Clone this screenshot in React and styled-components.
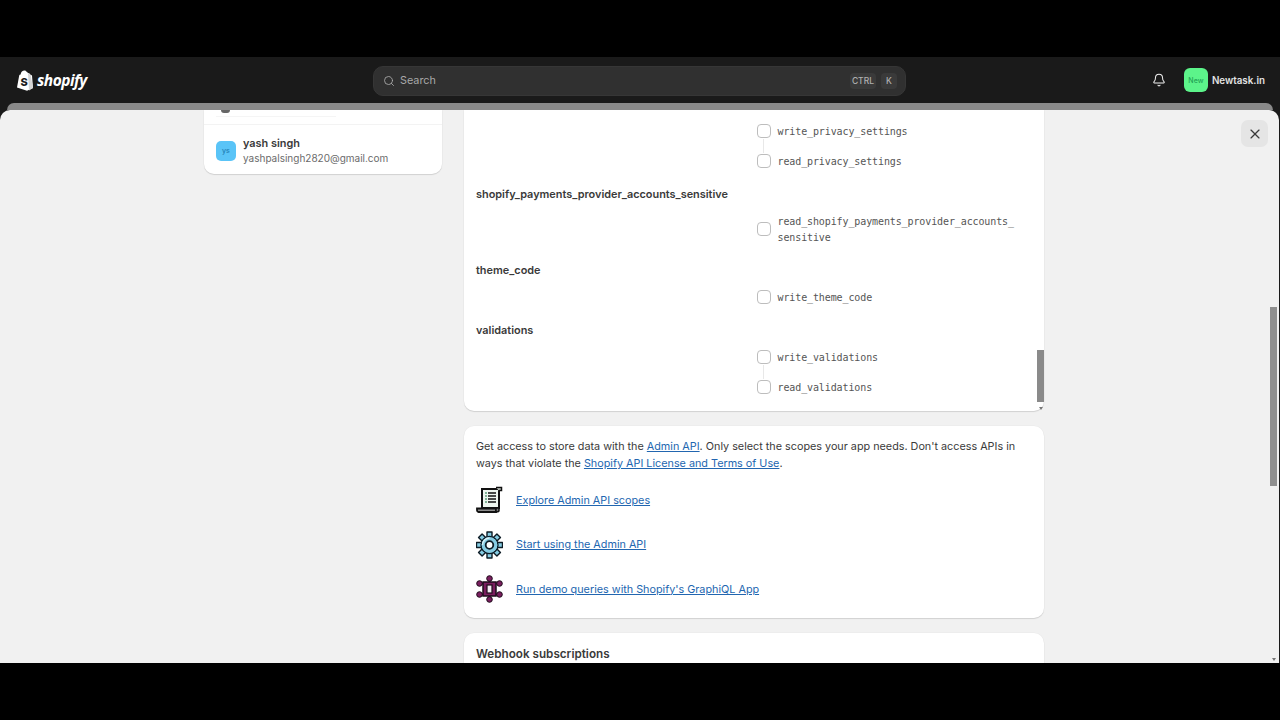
import React from 'react';
import styled, { createGlobalStyle } from 'styled-components';
import { Bell, Search, X } from 'lucide-react';

const GlobalStyle = createGlobalStyle`
  html, body {
    margin: 0;
    padding: 0;
    background: #000;
    font-family: Inter, "Liberation Sans", sans-serif;
    overflow: hidden;
  }
  * { box-sizing: border-box; }
`;

const Page = styled.div`
  width: 1280px;
  height: 720px;
  padding: 57px 0;
  background: #000;
`;

const Shell = styled.div`
  height: 606px;
  background: #1a1a1a;
  display: flex;
  flex-direction: column;
`;

const TopBar = styled.header`
  height: 46px;
  flex: none;
  display: grid;
  grid-template-columns: 1fr 533px 1fr;
  align-items: center;
  padding: 0 16px 0 15px;
`;

const Logo = styled.div`
  display: flex;
  align-items: center;
  gap: 3px;
  margin-left: 1px;
  color: #fff;
`;

const LogoText = styled.span`
  font-family: "Open Sans", sans-serif;
  font-style: italic;
  font-weight: 700;
  font-size: 15.5px;
  letter-spacing: -0.5px;
`;

const SearchBox = styled.div`
  height: 30px;
  margin-top: 1px;
  display: flex;
  align-items: center;
  gap: 5px;
  padding: 0 8px 0 9px;
  background: #303030;
  border: 1px solid #363636;
  border-radius: 10px;
  color: #a8a8a8;
  font-size: 10.8px;
`;

const SearchLabel = styled.span`
  flex: 1;
`;

const Key = styled.span`
  height: 16px;
  padding: 0 2px;
  min-width: 16px;
  display: flex;
  align-items: center;
  justify-content: center;
  background: #3a3a3a;
  border-radius: 4px;
  font-size: 8.5px;
  font-weight: 500;
  color: #b0b0b0;
`;

const Account = styled.div`
  display: flex;
  align-items: center;
  justify-content: flex-end;
  margin-right: -1px;
  color: #e3e3e3;
  font-size: 9.8px;
  font-weight: 600;
`;

const BellWrap = styled.span`
  display: flex;
  margin-right: 18px;
  color: #f1f1f1;
`;

const NewBadge = styled.span`
  width: 24px;
  height: 24px;
  margin-right: 4px;
  display: flex;
  align-items: center;
  justify-content: center;
  background: #5cf48a;
  border-radius: 6px;
  color: #22a455;
  font-size: 7px;
  font-weight: 500;
`;

const Strip = styled.div`
  height: 7px;
  flex: none;
  margin: 0 7px;
  background: #8a8a8a;
  border-radius: 8px 8px 0 0;
`;

const Modal = styled.main`
  position: relative;
  flex: 1;
  min-height: 0;
  overflow: hidden;
  margin-right: 1px;
  padding-left: 204px;
  display: flex;
  align-items: flex-start;
  gap: 22px;
  background: #f1f1f1;
  border-radius: 10px 10px 0 0;
`;

const Card = styled.section`
  background: #fff;
  box-shadow: 0 1px 1px rgba(0, 0, 0, 0.12), 0 0 0 0.5px rgba(0, 0, 0, 0.03);
`;

const Sidebar = styled(Card)`
  width: 238px;
  flex: none;
  border-radius: 0 0 10px 10px;
`;

const ClippedRow = styled.div`
  height: 15px;
  padding: 0 12px;
  border-bottom: 1px solid #f3f3f3;
`;

const ClippedInner = styled.div`
  height: 4px;
  width: 120px;
  border-bottom: 1px solid #f5f5f5;
`;

const ClippedIcon = styled.div`
  width: 9px;
  height: 3px;
  margin-left: 5px;
  background: #666;
  border-radius: 0 0 3px 3px;
`;

const MemberRow = styled.div`
  display: flex;
  align-items: center;
  gap: 7px;
  padding: 10px 12px 8px;
`;

const MemberAvatar = styled.span`
  width: 20px;
  height: 20px;
  display: flex;
  align-items: center;
  justify-content: center;
  background: #5ac4f7;
  border-radius: 5px;
  color: #1f7fb5;
  font-size: 7px;
  font-weight: 500;
`;

const MemberName = styled.div`
  font-size: 10.9px;
  line-height: 16px;
  font-weight: 600;
  color: #3a3a3a;
`;

const MemberEmail = styled.div`
  font-size: 10px;
  line-height: 15px;
  color: #6b6b6b;
`;

const Main = styled.div`
  width: 580px;
  flex: none;
  display: flex;
  flex-direction: column;
  gap: 15px;
`;

const ScopesCard = styled(Card)`
  position: relative;
  padding: 13px 12px 16px;
  border-radius: 0 0 10px 10px;
  display: flex;
  flex-direction: column;
  gap: 16px;
`;

const ScopeGroup = styled.div`
  display: flex;
  flex-direction: column;
  gap: 12px;
`;

const ScopeTitle = styled.h3`
  margin: 0;
  padding-top: 1px;
  height: 16px;
  font-size: 10.9px;
  line-height: 16px;
  font-weight: 600;
  color: #3a3a3a;
`;

const ScopeList = styled.div`
  display: flex;
  flex-direction: column;
  padding-left: 281px;
`;

const ScopeRow = styled.label`
  display: flex;
  align-items: center;
  gap: 7px;
`;

const Checkbox = styled.span`
  width: 13.500px;
  height: 13.500px;
  flex: none;
  background: #fff;
  border: 1px solid #bdbdbd;
  border-radius: 4px;
`;

const ScopeName = styled.code`
  width: 245px;
  padding-top: 1px;
  margin-bottom: -1px;
  font-family: "DejaVu Sans Mono", "Liberation Mono", monospace;
  font-size: 10px;
  letter-spacing: -0.11px;
  line-height: 16px;
  color: #555;
`;

const Connector = styled.div`
  width: 1px;
  height: 14px;
  margin-left: 6px;
  background: #e8e8e8;
`;

const InnerBar = styled.div`
  position: absolute;
  right: 0;
  top: 240px;
  width: 7px;
  height: 52px;
  background: #8a8a8a;
`;

const InfoCard = styled(Card)`
  padding: 12px 12px 15px;
  border-radius: 10px;
`;

const InfoText = styled.p`
  margin: 0 0 14px;
  font-size: 10.8px;
  line-height: 17px;
  color: #3a3a3a;
`;

const TextLink = styled.a`
  color: #2266b0;
  text-decoration: underline;
`;

const ResourceList = styled.div`
  display: flex;
  flex-direction: column;
  gap: 16.500px;
`;

const ResourceRow = styled.div`
  height: 28px;
  display: flex;
  align-items: center;
  gap: 13px;
  font-size: 10.8px;
`;

const WebhookCard = styled(Card)`
  height: 60px;
  padding: 13px 12px;
  border-radius: 10px 10px 0 0;
`;

const WebhookTitle = styled.h2`
  margin: 0;
  font-size: 11.7px;
  line-height: 16px;
  font-weight: 600;
  color: #3a3a3a;
`;

const CloseButton = styled.button`
  position: absolute;
  top: 10px;
  right: 11px;
  width: 27px;
  height: 27px;
  padding: 0;
  display: flex;
  align-items: center;
  justify-content: center;
  background: #e5e5e5;
  border: none;
  border-radius: 7px;
  color: #3a3a3a;
`;

const PageBar = styled.div`
  position: absolute;
  top: 197px;
  right: 2px;
  width: 7px;
  height: 179px;
  background: #8f8f8f;
`;

const ScrollArrow = styled.div`
  position: absolute;
  right: ${(p) => p.$right}px;
  bottom: ${(p) => p.$bottom}px;
  width: 0;
  height: 0;
  border-left: 2px solid transparent;
  border-right: 2px solid transparent;
  border-top: 3px solid #777;
`;

const ShopifyMark = () => (
  <svg width="18" height="21" viewBox="0 0 18 21">
    <path d="M1 17.6 3.200 5.400c.2-.6.6-.8 1.400-1C5 2 6.400.4 8.500.4c1 0 1.500.5 1.700 1 .8 0 1.500.8 1.800 1.900l1.200-.3.600 1.200 2.200 1.300L17 18l-6 2.800z" fill="#fff" />
    <path d="M12 3.500 13 20.500l4-2.500-2.300-13z" fill="#d5d5d5" />
    <text x="4.500" y="15.500" fontSize="11" fontWeight="800" fontFamily="Inter, sans-serif" fill="#1a1a1a">S</text>
  </svg>
);

const ScrollIcon = () => (
  <svg width="27" height="28" viewBox="0 0 27 28">
    <rect x="6" y="3" width="17" height="19" fill="#eef6ef" stroke="#111" strokeWidth="2" />
    <path d="M20 1.500h5.500v3H23" fill="#cfd6cf" stroke="#111" strokeWidth="1.500" />
    <path d="M12 7h8M12 10h8M12 13h8M12 16h8" stroke="#111" strokeWidth="1.700" />
    <path d="M9 7h2M9 10h2M9 13h2M9 16h2" stroke="#5f9f7c" strokeWidth="1.700" />
    <path d="M1 22.500h19v3.500H2.500C1.500 26 1 25 1 24z" fill="#8d8d8d" stroke="#111" strokeWidth="1.800" />
    <path d="M20 22h3v2.500c0 1-1 1.500-3 1.500z" fill="#777" stroke="#111" strokeWidth="1.500" />
  </svg>
);

const GearIcon = () => (
  <svg width="27" height="28" viewBox="0 0 27 28">
    <g fill="#86cde4" stroke="#0d1c26" strokeWidth="1.400" strokeLinejoin="round">
      {[0, 45, 90, 135, 180, 225, 270, 315].map((a) => (
        <rect key={a} x="11" y="1" width="5" height="6" transform={`rotate(${a} 13.500 14)`} />
      ))}
      <circle cx="13.500" cy="14" r="8.500" />
    </g>
    <circle cx="13.500" cy="14" r="7.800" fill="#86cde4" />
    <path d="M6.500 14a7 7 0 0 1 7-7" fill="none" stroke="#d6f0f8" strokeWidth="1.500" />
    <circle cx="13.500" cy="14" r="3.800" fill="#fbfeff" stroke="#0d1c26" strokeWidth="1.800" />
  </svg>
);

const GraphIcon = () => (
  <svg width="27" height="28" viewBox="0 0 27 28">
    <path d="M13.500 3v22M3.500 8.500h20M3.500 19.500h20" stroke="#1d0c1a" strokeWidth="2" />
    <rect x="7" y="7" width="13" height="14" fill="#7a1f5f" stroke="#1d0c1a" strokeWidth="1.500" />
    <rect x="11" y="10" width="5" height="8" fill="#f6eef4" stroke="#1d0c1a" strokeWidth="1.200" />
    {[[13.5, 3.5], [13.5, 24.5], [3.5, 8.5], [23.5, 8.5], [3.5, 19.5], [23.5, 19.5]].map(([cx, cy]) => (
      <circle key={`${cx}-${cy}`} cx={cx} cy={cy} r="2.800" fill="#7a1f5f" stroke="#1d0c1a" strokeWidth="1" />
    ))}
  </svg>
);

const scopeGroups = [
  { title: null, scopes: ['write_privacy_settings', 'read_privacy_settings'] },
  { title: 'shopify_payments_provider_accounts_sensitive', scopes: ['read_shopify_payments_provider_accounts_\u200Bsensitive'] },
  { title: 'theme_code', scopes: ['write_theme_code'] },
  { title: 'validations', scopes: ['write_validations', 'read_validations'] },
];

const resources = [
  { icon: <ScrollIcon />, label: 'Explore Admin API scopes' },
  { icon: <GearIcon />, label: 'Start using the Admin API' },
  { icon: <GraphIcon />, label: "Run demo queries with Shopify's GraphiQL App" },
];

export default function App() {
  return (
    <Page>
      <GlobalStyle />
      <Shell>
        <TopBar>
          <Logo>
            <ShopifyMark />
            <LogoText>shopify</LogoText>
          </Logo>
          <SearchBox>
            <Search size={12} strokeWidth={1.75} />
            <SearchLabel>Search</SearchLabel>
            <Key>CTRL</Key>
            <Key>K</Key>
          </SearchBox>
          <Account>
            <BellWrap><Bell size={14} strokeWidth={1.75} /></BellWrap>
            <NewBadge>New</NewBadge>
            Newtask.in
          </Account>
        </TopBar>
        <Strip />
        <Modal>
          <Sidebar>
            <ClippedRow>
              <ClippedIcon />
              <ClippedInner />
            </ClippedRow>
            <MemberRow>
              <MemberAvatar>ys</MemberAvatar>
              <div>
                <MemberName>yash singh</MemberName>
                <MemberEmail>yashpalsingh2820@gmail.com</MemberEmail>
              </div>
            </MemberRow>
          </Sidebar>
          <Main>
            <ScopesCard>
              {scopeGroups.map((group) => (
                <ScopeGroup key={group.scopes[0]}>
                  {group.title && <ScopeTitle>{group.title}</ScopeTitle>}
                  <ScopeList>
                    {group.scopes.map((scope, i) => (
                      <React.Fragment key={scope}>
                        {i > 0 && <Connector />}
                        <ScopeRow>
                          <Checkbox />
                          <ScopeName>{scope}</ScopeName>
                        </ScopeRow>
                      </React.Fragment>
                    ))}
                  </ScopeList>
                </ScopeGroup>
              ))}
              <InnerBar />
              <ScrollArrow $right={1} $bottom={1} />
            </ScopesCard>
            <InfoCard>
              <InfoText>
                Get access to store data with the <TextLink>Admin API</TextLink>. Only select the scopes your app needs. Don't access APIs in ways that violate the <TextLink>Shopify API License and Terms of Use</TextLink>.
              </InfoText>
              <ResourceList>
                {resources.map((r) => (
                  <ResourceRow key={r.label}>
                    {r.icon}
                    <TextLink>{r.label}</TextLink>
                  </ResourceRow>
                ))}
              </ResourceList>
            </InfoCard>
            <WebhookCard>
              <WebhookTitle>Webhook subscriptions</WebhookTitle>
            </WebhookCard>
          </Main>
          <CloseButton aria-label="Close"><X size={16} strokeWidth={1.75} /></CloseButton>
          <PageBar />
          <ScrollArrow $right={3} $bottom={2} />
        </Modal>
      </Shell>
    </Page>
  );
}
